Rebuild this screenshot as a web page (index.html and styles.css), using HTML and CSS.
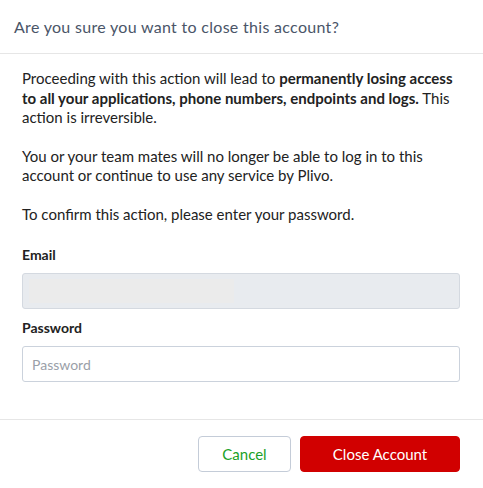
FILE: index.html
```html
<!DOCTYPE html>
<html lang="en">
<head>
    <meta charset="UTF-8">
    <meta name="viewport" content="width=device-width, initial-scale=1.0">
    <title>Close Account</title>
    <link rel="stylesheet" href="styles.css">
</head>
<body>
    <div class="modal">
        <div class="modal-header">
            <h2>Are you sure you want to close this account?</h2>
        </div>

        <div class="modal-body">
            <p>Proceeding with this action will lead to <strong>permanently losing access to all your applications, phone numbers, endpoints and logs.</strong> This action is irreversible.</p>
            <p>You or your team mates will no longer be able to log in to this account or continue to use any service by Plivo.</p>
            <p>To confirm this action, please enter your password.</p>

            <div class="field">
                <label>Email</label>
                <div class="input input-disabled"><span class="redacted"></span></div>
            </div>

            <div class="field">
                <label for="password">Password</label>
                <input class="input" type="password" id="password" placeholder="Password">
            </div>
        </div>

        <div class="modal-footer">
            <button class="button button-cancel">Cancel</button>
            <button class="button button-danger">Close Account</button>
        </div>
    </div>
</body>
</html>
```

FILE: styles.css
```css
body {
    font-family: Lato, 'Open Sans', sans-serif;
    margin: 0;
    padding: 0;
    background-color: #fff;
    color: #222;
}
.modal {
    width: 483px;
    height: 488px;
    background: white;
}
.modal-header {
    height: 53px;
    border-bottom: 1px solid #e6e6e6;
    display: flex;
    align-items: center;
    padding: 0 14px;
}
.modal-header h2 {
    margin: 0;
    font-size: 16px;
    font-weight: 400;
    color: #4a5568;
    letter-spacing: 0.3px;
}
.modal-body {
    padding: 15px 23px 37px 22px;
    border-bottom: 1px solid #e6e6e6;
}
.modal-body p {
    margin: 0 0 19px;
    font-size: 15px;
    line-height: 19.5px;
}
.modal-body strong {
    font-weight: 700;
}
.field {
    padding-top: 3px;
}
.field + .field {
    margin-top: 7px;
}
.field label {
    display: block;
    font-size: 14px;
    font-weight: 700;
    margin: 0 0 9px;
    line-height: 18px;
}
.input {
    box-sizing: border-box;
    display: block;
    width: 100%;
    height: 36px;
    border: 1px solid #cbd2dc;
    border-radius: 3px;
    padding: 0 9px;
    font-family: inherit;
    font-size: 14px;
    color: #222;
    outline: none;
}
.input::placeholder {
    color: #9aa0a8;
}
.input-disabled {
    background-color: #e8ebef;
    border-color: #d4d9e0;
    display: flex;
    align-items: center;
    padding: 0 6px;
}
.redacted {
    display: block;
    width: 205px;
    height: 24px;
    background-color: #ebebeb;
}
.modal-footer {
    display: flex;
    justify-content: flex-end;
    gap: 9px;
    padding: 16px 23px;
}
.button {
    height: 36px;
    border-radius: 4px;
    font-family: inherit;
    font-size: 15px;
    cursor: pointer;
}
.button-cancel {
    width: 93px;
    background: white;
    border: 1px solid #c4ccd8;
    color: #1aa127;
}
.button-danger {
    width: 160px;
    background-color: #d10000;
    border: 1px solid #d10000;
    color: white;
}
.button-danger:hover {
    background-color: #b80000;
}
```
